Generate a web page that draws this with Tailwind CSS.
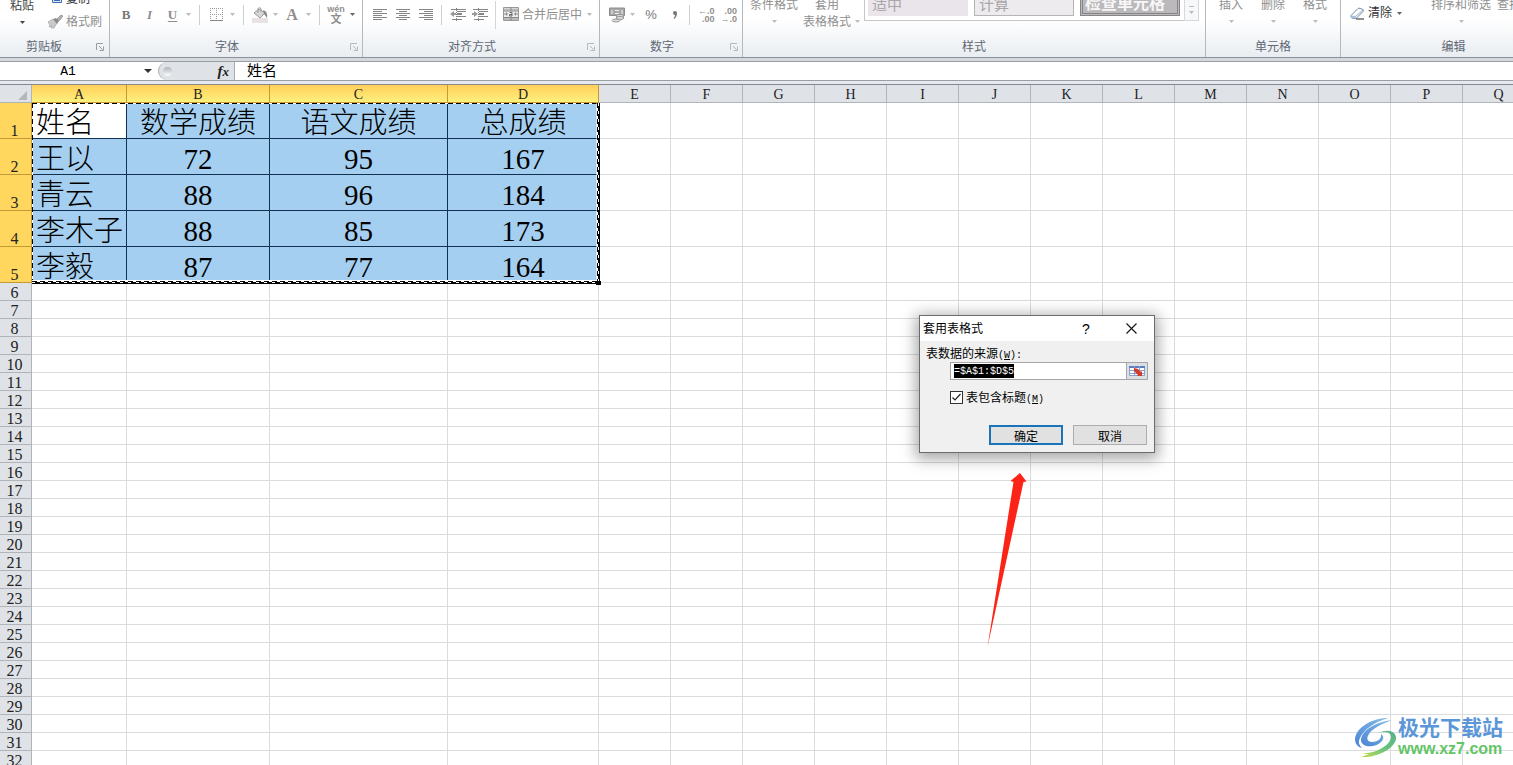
<!DOCTYPE html>
<html lang="zh-CN">
<head>
<meta charset="utf-8">
<title>工作簿 - 套用表格式</title>
<script src="https://cdn.jsdelivr.net/npm/@tailwindcss/browser@4"></script>
</head>
<body class="relative flex h-screen flex-col overflow-hidden bg-white font-['Liberation_Sans','Noto_Sans_CJK_SC',sans-serif] text-xs text-[#8f8f8f]">

<svg class="hidden" aria-hidden="true">
  <symbol id="caret" viewBox="0 0 5 3"><path d="M0 0h5L2.500 3z" fill="currentColor"/></symbol>
  <symbol id="launch" viewBox="0 0 8 8"><path d="M.5 7V.5H7M3 3l3.500 3.500M7.500 3.500v4h-4" fill="none" stroke="currentColor"/></symbol>
</svg>

<!-- Ribbon -->
<header class="flex h-[58px] shrink-0 overflow-hidden border-b border-[#8a929b] bg-linear-to-b from-white from-35% to-[#e9edf1]">
  <section class="flex w-[110px] shrink-0 flex-col border-r border-[#b4b9be]">
    <div class="flex h-[38px]">
      <button class="flex w-11 flex-col items-center text-[#444]"><span class="-mt-0.5 leading-4">粘贴</span><svg class="mt-[7px] h-[3px] w-[5px]"><use href="#caret"/></svg></button>
      <div class="flex flex-col">
        <button class="flex h-[14px] items-start gap-1 pl-2 text-[#333]">
          <svg class="h-[3px] w-[10px]" viewBox="0 0 10 3"><path d="M.5 0v2.500h9V0" fill="#dbe8f8" stroke="#3a6ab0"/><path d="M2 .5h6" stroke="#3a6ab0"/></svg>
          <span class="-mt-[9px] leading-4">复制</span>
        </button>
        <button class="flex items-center gap-[3px] pl-1">
          <svg class="h-4 w-[15px]" viewBox="0 0 15 16"><path d="M0 8l5-3 4 4-3 5H3l1-2-3 1 1-2z" fill="#c9c9c9" stroke="#a5a5a5" stroke-width=".7"/><path d="M5 5l3-1 3 3-2 3z" fill="#8b8b8b"/><path d="M9 5l4-4 2 1-4 5z" fill="#b0b0b0" stroke="#888" stroke-width=".7"/></svg>
          <span class="leading-4">格式刷</span>
        </button>
      </div>
    </div>
    <div class="flex h-[17px] items-center text-[#5e6875]"><span class="w-[88px] text-center leading-4">剪贴板</span><button class="ml-2 text-[#989da3]" aria-label="剪贴板选项"><svg class="h-2 w-2"><use href="#launch"/></svg></button></div>
  </section>

  <section class="flex w-[253px] shrink-0 flex-col border-r border-[#b4b9be]">
    <div class="mb-[9px] flex h-[29px] items-center pl-1 font-['Liberation_Serif',serif] text-[13px]">
      <button class="w-6 font-bold text-[#777]">B</button>
      <button class="w-[23px] font-bold italic">I</button>
      <button class="w-[23px] font-bold underline underline-offset-2">U</button>
      <button class="ml-0.5 text-[#bbb]" aria-label="下划线选项"><svg class="h-[3px] w-[5px]"><use href="#caret"/></svg></button>
      <i class="ml-2 h-5 w-px bg-[#cfcfcf]"></i>
      <button class="ml-2.5" aria-label="边框"><svg class="h-[14px] w-[14px]" viewBox="0 0 14 14"><path d="M.5 0v13M6.500 0v13M12.500 0v13M0 .5h13M0 6.500h13" stroke="#999" stroke-dasharray="1 1"/><path d="M0 12.500h13" stroke="#888"/></svg></button>
      <button class="ml-1.5 text-[#bbb]" aria-label="边框选项"><svg class="h-[3px] w-[5px]"><use href="#caret"/></svg></button>
      <i class="ml-2 h-5 w-px bg-[#cfcfcf]"></i>
      <button class="ml-2" aria-label="填充颜色"><svg class="h-4 w-4" viewBox="0 0 16 16"><path d="M0 11h16v5H0z" fill="#e8e2e6"/><path d="M2 6l5-4 6 4-5 5z" fill="#d6d6d6" stroke="#9a9a9a"/><path d="M6 6V1.500q1.500-1.500 3 0V5" fill="none" stroke="#999"/><path d="M11 3q5 1 4 8l-3-4z" fill="#8a8a8a"/></svg></button>
      <button class="ml-[5px] text-[#bbb]" aria-label="填充选项"><svg class="h-[3px] w-[5px]"><use href="#caret"/></svg></button>
      <button class="w-7 text-base font-bold leading-4">A</button>
      <button class="text-[#bbb]" aria-label="字体颜色选项"><svg class="h-[3px] w-[5px]"><use href="#caret"/></svg></button>
      <i class="ml-2 h-5 w-px bg-[#cfcfcf]"></i>
      <button class="ml-1 flex w-6 flex-col items-center font-['Liberation_Sans','Noto_Sans_CJK_SC',sans-serif]"><span class="text-[9px] font-bold leading-[9px]">wén</span><span class="text-[11px] font-bold leading-[11px]">文</span></button>
      <button class="ml-0.5 text-[#666]" aria-label="拼音选项"><svg class="h-[3px] w-[5px]"><use href="#caret"/></svg></button>
    </div>
    <div class="flex h-[17px] items-center text-[#5e6875]"><span class="w-[234px] text-center leading-4">字体</span><button class="ml-1.5 text-[#b5b9be]" aria-label="字体选项"><svg class="h-2 w-2"><use href="#launch"/></svg></button></div>
  </section>

  <section class="flex w-[237px] shrink-0 flex-col border-r border-[#b4b9be]">
    <div class="mb-[9px] flex h-[29px] items-center pl-2.5 text-[#858585]">
      <button aria-label="左对齐"><svg class="h-3 w-[15px]" viewBox="0 0 15 12"><path d="M0 .5h14M0 2.500h9M0 4.500h14M0 6.500h9M0 8.500h14M0 10.500h9" stroke="currentColor"/></svg></button>
      <button class="ml-2" aria-label="居中"><svg class="h-3 w-[15px]" viewBox="0 0 15 12"><path d="M0 .5h14M3 2.500h8M0 4.500h14M3 6.500h8M0 8.500h14M3 10.500h8" stroke="currentColor"/></svg></button>
      <button class="ml-2" aria-label="右对齐"><svg class="h-3 w-[15px]" viewBox="0 0 15 12"><path d="M0 .5h14M5 2.500h9M0 4.500h14M5 6.500h9M0 8.500h14M5 10.500h9" stroke="currentColor"/></svg></button>
      <i class="ml-[7px] h-5 w-px bg-[#cfcfcf]"></i>
      <button class="ml-2" aria-label="减少缩进"><svg class="h-[14px] w-4" viewBox="0 0 16 14"><path d="M1 1.500h15M7 3.500h9M7 5.500h5M7 6.500h5M7 8.500h9M2 11.500h10" stroke="currentColor"/><path d="M6.500 0v14" stroke="currentColor" stroke-dasharray="1 1"/><path d="M0 6l4-3v2h2v2H4v2z" fill="#999"/></svg></button>
      <button class="ml-1.5" aria-label="增加缩进"><svg class="h-[14px] w-4" viewBox="0 0 16 14"><path d="M1 1.500h15M7 3.500h9M7 5.500h5M7 6.500h5M7 8.500h9M2 11.500h10" stroke="currentColor"/><path d="M6.500 0v14" stroke="currentColor" stroke-dasharray="1 1"/><path d="M6 6L2 3v2H0v2h2v2z" fill="#999"/></svg></button>
      <i class="ml-[7px] h-7 w-px bg-[#d5d5d5]"></i>
      <button class="ml-[7px] flex items-center gap-[3px] text-[#8f8f8f]">
        <svg class="h-[15px] w-4" viewBox="0 0 16 15"><path d="M.5.5h15v13H.5z" fill="#eee" stroke="#999"/><path d="M1 1.500h14v2H1zM1 11h14v2H1z" fill="#bbb"/><path d="M0 4h16M0 10.500h16M8 0v4M8 10v4M1 7h4M11 7h4M3.500 5.500v3M12.500 5.500v3" stroke="#888"/><path d="M6.500 5.500h2.500v3.500H6.500V7.500H9" fill="none" stroke="#666"/></svg>
        <span class="leading-4">合并后居中</span></button>
      <button class="ml-[5px] text-[#bbb]" aria-label="合并选项"><svg class="h-[3px] w-[5px]"><use href="#caret"/></svg></button>
    </div>
    <div class="flex h-[17px] items-center text-[#5e6875]"><span class="w-[218px] text-center leading-4">对齐方式</span><button class="ml-1.5 text-[#b5b9be]" aria-label="对齐选项"><svg class="h-2 w-2"><use href="#launch"/></svg></button></div>
  </section>

  <section class="flex w-[143px] shrink-0 flex-col border-r border-[#b4b9be]">
    <div class="mb-[9px] flex h-[29px] items-center pl-[9px]">
      <button aria-label="会计数字格式"><svg class="h-4 w-4" viewBox="0 0 16 16"><path d="M.5 1h15v7.500H.5z" fill="#a8a8a8" stroke="#8c8c8c"/><path d="M3 3v4M13 3v4M6 3.500h4M6 6.500h4" stroke="#eee"/><ellipse cx="11" cy="9" rx="4" ry="1.500" fill="#ddd" stroke="#888" stroke-width=".8"/><ellipse cx="11" cy="11" rx="4" ry="1.500" fill="#ddd" stroke="#888" stroke-width=".8"/><ellipse cx="7" cy="13.500" rx="4" ry="1.500" fill="#ddd" stroke="#888" stroke-width=".8"/></svg></button>
      <button class="ml-[5px] text-[#bbb]" aria-label="会计格式选项"><svg class="h-[3px] w-[5px]"><use href="#caret"/></svg></button>
      <button class="w-8 text-[13px] text-[#777]">%</button>
      <button class="flex w-4 justify-center" aria-label="千位分隔样式"><svg class="h-2 w-1" viewBox="0 0 4 8"><path d="M0 2a2 2 0 0 1 4 0q0 4-3 6l-.5-.6Q2 6 2 4 0 4 0 2" fill="#777"/></svg></button>
      <i class="ml-1.5 h-5 w-px bg-[#cfcfcf]"></i>
      <button class="ml-2 text-right text-[9px] font-bold leading-[8px]"><span class="block">←.0</span><span class="block">.00</span></button>
      <button class="ml-1.5 text-right text-[9px] font-bold leading-[8px]"><span class="block">.00</span><span class="block">→.0</span></button>
    </div>
    <div class="flex h-[17px] items-center text-[#5e6875]"><span class="w-[124px] text-center leading-4">数字</span><button class="ml-1.5 text-[#b5b9be]" aria-label="数字选项"><svg class="h-2 w-2"><use href="#launch"/></svg></button></div>
  </section>

  <section class="flex w-[463px] shrink-0 flex-col border-r border-[#b4b9be]">
    <div class="flex h-[38px] items-start pl-[7px]">
      <button class="flex flex-col items-center"><span class="-mt-[3px] leading-4">条件格式</span><svg class="mt-[7px] h-[3px] w-[5px] text-[#bbb]"><use href="#caret"/></svg></button>
      <button class="ml-[5px] flex items-end gap-1"><span class="-mt-[3px] block leading-[17px]">套用<br>表格格式</span><svg class="mb-2 h-[3px] w-[5px] text-[#bbb]"><use href="#caret"/></svg></button>
      <div class="ml-1 flex h-[21px] items-start border-b border-l border-[#c5c5c5] pl-[3px] text-[15px]">
        <button class="h-4 w-[100px] bg-[#e9e5ea] pl-1 text-left text-[#aaa6aa]"><span class="-mt-[6px] block leading-5">适中</span></button>
        <button class="ml-1.5 h-4 w-[100px] border border-t-0 border-[#b5b5b5] bg-[#eeebef] pl-1 text-left text-[#aaa6aa]"><span class="-mt-[6px] block leading-5">计算</span></button>
        <button class="ml-1.5 h-4 w-[100px] border-3 border-t-0 border-double border-[#858585] bg-[#bcb9bc] pl-0.5 text-left text-base font-bold text-[#f7f7f7]"><span class="-mt-[6px] block leading-5">检查单元格</span></button>
        <button class="ml-1 flex h-[21px] w-[15px] flex-col items-center justify-center gap-1 border border-t-0 border-[#d5d8dc] bg-[#f7f8fa] text-[#bbb]" aria-label="其他样式"><i class="h-px w-[5px] bg-[#bbb]"></i><svg class="h-[3px] w-[5px]"><use href="#caret"/></svg></button>
      </div>
    </div>
    <div class="flex h-[17px] items-center justify-center leading-4 text-[#5e6875]">样式</div>
  </section>

  <section class="flex w-[135px] shrink-0 flex-col border-r border-[#b4b9be]">
    <div class="flex h-[38px] items-start gap-[18px] pl-[13px]">
      <button class="flex flex-col items-center"><span class="-mt-[3px] leading-4">插入</span><svg class="mt-[7px] h-[3px] w-[5px] text-[#bbb]"><use href="#caret"/></svg></button>
      <button class="flex flex-col items-center"><span class="-mt-[3px] leading-4">删除</span><svg class="mt-[7px] h-[3px] w-[5px] text-[#bbb]"><use href="#caret"/></svg></button>
      <button class="flex flex-col items-center"><span class="-mt-[3px] leading-4">格式</span><svg class="mt-[7px] h-[3px] w-[5px] text-[#bbb]"><use href="#caret"/></svg></button>
    </div>
    <div class="flex h-[17px] items-center justify-center leading-4 text-[#5e6875]">单元格</div>
  </section>

  <section class="flex w-[225px] shrink-0 flex-col">
    <div class="flex h-[38px] items-start pl-[9px]">
      <button class="mt-1 flex items-center gap-[3px] text-[#333]">
        <svg class="h-[13px] w-[15px]" viewBox="0 0 15 13"><path d="M1 8.500L8 1.500q1-1 2 0l3 1q1 1 0 2L6 11.500H3q-3-1-2-3z" fill="#fff" stroke="#6f87a6"/><path d="M1 8.500l5 .5v2.500H3q-3-1-2-3z" fill="#a9c0dc"/><path d="M6 9l7-6" stroke="#9fb3cc"/><path d="M6 12h8" stroke="#222"/></svg>
        <span class="leading-[18px]">清除</span><svg class="ml-0.5 h-[3px] w-[5px] text-[#666]"><use href="#caret"/></svg></button>
      <button class="ml-[29px] flex flex-col items-center"><span class="-mt-[3px] leading-4">排序和筛选</span><svg class="mt-[7px] h-[3px] w-[5px] text-[#bbb]"><use href="#caret"/></svg></button>
      <button class="ml-[6px]"><span class="-mt-[3px] block whitespace-nowrap leading-4">查找和选择</span></button>
    </div>
    <div class="flex h-[17px] items-center justify-center leading-4 text-[#5e6875]">编辑</div>
  </section>
</header>

<!-- Formula bar -->
<div class="h-[3px] shrink-0 bg-[#d5d9de]"></div>
<div class="flex h-5 shrink-0 border-y border-[#9a9fa5] bg-white text-black">
  <input aria-label="名称框" value="A1" class="w-[136px] bg-white pt-0.5 text-center font-['Liberation_Mono',monospace] text-[13px] outline-none">
  <button class="flex w-6 items-center justify-center text-[#333]" aria-label="名称列表"><svg class="h-1 w-2" viewBox="0 0 8 4"><path d="M0 0h8L4 4z" fill="currentColor"/></svg></button>
  <div class="-ml-0.5 flex w-[77px] items-center justify-between rounded-l-full border-l border-r border-[#a8adb3] bg-[#dfe3e8] pl-1 pr-[5px]">
    <i class="size-[9px] rounded-full bg-linear-to-b from-[#aeb3b9] to-white"></i>
    <button class="font-['Liberation_Serif',serif] text-[15px] font-bold italic leading-4 text-[#222]" aria-label="插入函数">f<span class="text-[13px]">x</span></button>
  </div>
  <input aria-label="编辑栏" value="姓名" class="min-w-0 flex-1 bg-white pl-3 text-[15px] outline-none">
</div>
<div class="h-1 shrink-0 border-b border-[#85898e] bg-[#e5e9ef]"></div>

<!-- Sheet -->
<main class="relative min-h-0 flex-1 overflow-hidden">
  <table class="w-[1535px] table-fixed border-separate border-spacing-0 font-['Liberation_Serif','Noto_Sans_CJK_SC',serif] text-[#222]">
    <colgroup><col class="w-8"><col class="w-[95px]"><col class="w-[143px]"><col class="w-[178px]"><col class="w-[151px]"><col span="13" class="w-[72px]"></colgroup>
    <thead><tr id="heads"></tr></thead>
    <tbody id="rows"></tbody>
  </table>

  <svg class="absolute left-8 top-[18px] h-[182px] w-[569px]" viewBox="0 0 569 182" fill="none" aria-hidden="true">
    <path d="M0 .5H567M.5 0V180" stroke="#fff"/>
    <path d="M0 .5H567M.5 0V180" stroke="#000" stroke-dasharray="5 3"/>
    <path d="M0 178.500H566M566 0V180" stroke="#fff" stroke-width="3"/>
    <path d="M0 178.500H566M565.500 0V180" stroke="#000" stroke-dasharray="5 3"/>
    <path d="M3 179.500H566M566.500 3V180" stroke="#000" stroke-dasharray="5 3"/>
    <path d="M0 180.500H566M567.500 0V178" stroke="#000"/>
    <path d="M564 178h5v4h-5z" fill="#000"/>
  </svg>
</main>

<!-- Dialog -->
<form role="dialog" aria-labelledby="dlg" class="absolute left-[919px] top-[315px] flex h-[138px] w-[236px] flex-col border border-[#6b6b6b] bg-[#f0f0f0] text-black shadow-[0_3px_14px_3px_rgba(0,0,0,0.35)]" onsubmit="return false">
  <div class="flex h-[25px] items-center bg-white pl-[3px]">
    <h1 id="dlg" class="flex-1 text-xs">套用表格式</h1>
    <button type="button" class="w-[46px] text-sm leading-4" aria-label="帮助">?</button>
    <button type="button" class="flex w-[45px] justify-center" aria-label="关闭"><svg class="size-[11px]" viewBox="0 0 11 11"><path d="M.5.5l10 10M10.500.5l-10 10" stroke="#111" stroke-width="1.100"/></svg></button>
  </div>
  <div class="px-1.5 pt-[5px]">
    <label for="src" class="block h-4 leading-4">表数据的来源<span class="font-['Liberation_Mono',monospace] text-[10px]">(<u>W</u>):</span></label>
    <div class="ml-6 flex h-[18px] border border-[#a5a5a5] bg-white">
      <div class="flex min-w-0 flex-1 items-center pl-[3px]"><input id="src" value="=$A$1:$D$5" class="h-[14px] w-[60px] bg-black pt-px font-['Liberation_Mono',monospace] text-[10px] text-white outline-none"></div>
      <button type="button" class="flex w-[21px] items-center justify-center border-l border-[#a5a5a5] bg-[#dcdfe4]" aria-label="折叠对话框"><svg class="h-3 w-4" viewBox="0 0 16 12"><path d="M.5 1.500h15v9H.5z" fill="#fff" stroke="#8aa0cc"/><path d="M0 1h16v2H0z" fill="#5b7ec2"/><path d="M0 5.500h16M0 8.500h16M5.500 1v10M10.500 1v10" stroke="#8aa0cc"/><path d="M5 3l4 1 3 3 1-1v5H8l1-1-4-4z" fill="#d33a2c"/></svg></button>
    </div>
    <div class="ml-6 mt-[7px] flex h-5 items-center gap-[3px]">
      <span class="relative size-[13px]">
        <input id="hdr" type="checkbox" checked class="block size-[13px] appearance-none border border-[#333] bg-white">
        <svg class="pointer-events-none absolute inset-0 size-[13px]" viewBox="0 0 13 13"><path d="M2.500 6.500L5 9l5.500-6" fill="none" stroke="#222" stroke-width="1.200"/></svg>
      </span>
      <label for="hdr" class="pt-1 leading-4">表包含标题<span class="font-['Liberation_Mono',monospace] text-[10px]">(<u>M</u>)</span></label>
    </div>
  </div>
  <div class="mt-auto flex justify-end gap-2.5 pb-[7px] pr-[7px]">
    <button class="h-5 w-[74px] border-2 border-[#1c74b8] bg-[#e1e1e1] pt-0.5 leading-4">确定</button>
    <button type="button" class="h-5 w-[74px] border border-[#adadad] bg-[#e1e1e1] pt-[3px] leading-4">取消</button>
  </div>
</form>

<!-- Pointer arrow -->
<svg class="absolute left-[987px] top-[473px] h-[176px] w-10" viewBox="0 0 40 176" aria-hidden="true"><path d="M.500 174L26.500 9l-3-1L33 0l6.500 8.500L36.500 9Z" fill="#fb2416"/></svg>

<!-- Watermark -->
<div class="absolute bottom-[7px] right-[10px] flex items-center gap-px" lang="zh-CN">
  <svg class="h-[41px] w-[43px]" viewBox="0 0 43 41" aria-hidden="true">
    <defs>
      <linearGradient id="green" x1="1" y1="0" x2="0" y2="1"><stop offset="0" stop-color="#55b28a"/><stop offset=".5" stop-color="#6cc37c"/><stop offset="1" stop-color="#c9dc4c"/></linearGradient>
      <linearGradient id="blue" x1="1" y1="0" x2="0" y2="1"><stop offset="0" stop-color="#86bfe9"/><stop offset="1" stop-color="#4a84d4"/></linearGradient>
    </defs>
    <path d="M34 1C17 1 2 11 1 22c0 5 3 8 7 9-3-3-4-6-2-10C10 12 21 5 34 1z" fill="url(#blue)"/>
    <path d="M38 3C22 5 8 13 7 23c0 7 13 9 20 2 3-3 3-6 0-8 1 5-4 8-9 8-5 0-6-4-3-8C19 11 28 7 38 3z" fill="url(#blue)"/>
    <path d="M25 16c6-2 11-1 12 3 1 6-8 13-18 16-5 1-10 2-14 1 4 1 8 1 10 1l-8 3c16 1 33-8 35-18 1-7-8-11-17-6z" fill="url(#green)"/>
  </svg>
  <div class="flex flex-col">
    <strong class="text-[21px] font-bold leading-6 text-[#5b97d8]">极光下载站</strong>
    <span class="font-['Liberation_Sans',sans-serif] text-base font-bold leading-[18px] text-[#63c568]">www.xz7.com</span>
  </div>
</div>

<script>
const data = [
  ['姓名', '数学成绩', '语文成绩', '总成绩'],
  ['王以', 72, 95, 167],
  ['青云', 88, 96, 184],
  ['李木子', 88, 85, 173],
  ['李毅', 87, 77, 164]
];
const letters = [...'ABCDEFGHIJKLMNOPQ'];

document.getElementById('heads').innerHTML =
  '<td class="h-[18px] border-r border-b border-[#b1b5ba] bg-[#dfe3e8] p-0"><svg class="ml-[18px] mt-1 size-[9px]" viewBox="0 0 9 9"><path d="M9 0v9H0z" fill="#b4b8bd"/></svg></td>' +
  letters.map((l, i) => i < 4
    ? `<th scope="col" class="h-[18px] border-r border-b border-[#c39a36] bg-linear-to-b from-[#ffd05a] to-[#fff07c] p-0 pt-[3px] text-sm leading-[14px] font-normal">${l}</th>`
    : `<th scope="col" class="h-[18px] border-r border-b border-[#b1b5ba] bg-[#dfe3e8] p-0 pt-[3px] text-sm leading-[14px] font-normal">${l}</th>`).join('');

let html = '';
for (let r = 0; r < 32; r++) {
  const row = data[r];
  html += row
    ? `<tr><th scope="row" class="h-9 border-r border-b border-[#c39a36] bg-[#ffd75e] p-0 pr-0.5 align-bottom text-base leading-[15px] font-normal">${r + 1}</th>`
    : `<tr><th scope="row" class="h-[18px] border-r border-b border-[#b1b5ba] bg-[#dfe3e8] p-0 pt-[3px] pr-0.5 text-base leading-[14px] font-normal">${r + 1}</th>`;
  letters.forEach((l, c) => {
    if (row && c === 0 && r === 0) html += `<td class="h-9 border-r border-b border-[#12304f] bg-white p-0 pt-1.5 pl-1 text-[29px] leading-[29px] font-light whitespace-nowrap text-black"><span class="block h-[29px]">${row[c]}</span></td>`;
    else if (row && c === 0) html += `<td class="h-9 border-r border-b border-[#12304f] bg-[#a5cff0] p-0 pt-1.5 pl-1 text-[29px] leading-[29px] font-light whitespace-nowrap text-black"><span class="block h-[29px]">${row[c]}</span></td>`;
    else if (row && c < 4) html += `<td class="h-9 border-r border-b border-[#12304f] bg-[#a5cff0] p-0 pt-1.5 text-center text-[29px] leading-[29px] font-light whitespace-nowrap text-black"><span class="block h-[29px]">${row[c]}</span></td>`;
    else html += '<td class="border-r border-b border-[#d9dbdd] p-0"></td>';
  });
  html += '</tr>';
}
document.getElementById('rows').innerHTML = html;
</script>
</body>
</html>
